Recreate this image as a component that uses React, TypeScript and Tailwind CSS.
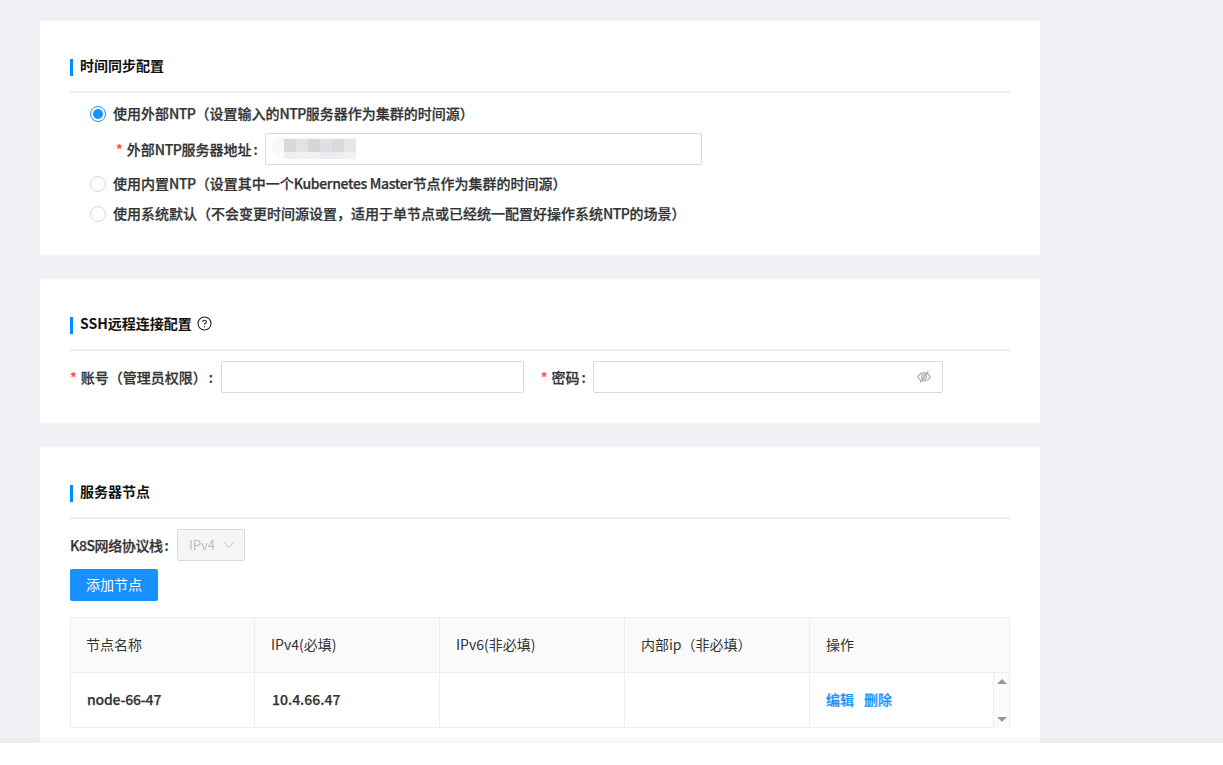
import React from 'react'

const font = "font-['Microsoft_YaHei','Noto_Sans_CJK_SC','Noto_Sans',sans-serif]"
const labelText = 'text-[14px] font-medium text-[#333] [-webkit-text-stroke:0.25px_#333]'

function SectionTitle({ title, help }: { title: string; help?: boolean }) {
  return (
    <div className="h-[72px] pt-[38px] border-b-2 border-[#eeeeee]">
      <div className="flex items-center h-[17px] border-l-[3px] border-[#0090ff] pl-[7px] text-[14px] leading-[17px] font-bold text-[#111]">
        <span className="pb-[4px]">{title}</span>
        {help && (
          <svg className="ml-[5px] mb-[4px]" width="15" height="15" viewBox="0 0 15 15" fill="none" stroke="#222" strokeWidth="1.1">
            <circle cx="7.5" cy="7.5" r="6.5" />
            <path d="M5.6 6c0-1.1.8-1.8 1.9-1.8s1.9.7 1.9 1.6c0 1.4-1.9 1.4-1.9 2.9" />
            <path d="M7.5 10.2v1.1" />
          </svg>
        )}
      </div>
    </div>
  )
}

function Radio({ checked, children }: { checked?: boolean; children: React.ReactNode }) {
  return (
    <div className="flex items-center h-[20px] pl-[20px]">
      <span className={`flex items-center justify-center w-4 h-4 rounded-full border bg-white ${checked ? 'border-[#1890ff]' : 'border-[#d9d9d9]'}`}>
        {checked && <span className="w-[10px] h-[10px] rounded-full bg-[#1890ff]" />}
      </span>
      <span className={`ml-[7px] pb-[2px] ${labelText}`}>{children}</span>
    </div>
  )
}

const mosaic = [
  ['bg-[#f7f7f7]', 'bg-[#f9f9f9]', 'bg-[#f9f9f9]', 'bg-[#f9f9f9]', 'bg-[#fafafa]', 'bg-[#fafafa]', 'bg-[#fcfcfc]'],
  ['bg-[#f7f7f7]', 'bg-[#d9d8d7]', 'bg-[#e5e2df]', 'bg-[#d5d6d9]', 'bg-[#dfe0e3]', 'bg-[#d9dadd]', 'bg-[#e6e6e6]'],
  ['bg-[#fbfbfb]', 'bg-[#f0f0f0]', 'bg-[#f2f1f0]', 'bg-[#f2f2f3]', 'bg-[#ececee]', 'bg-[#ededee]', 'bg-[#f2f2f2]'],
]
const mosaicHeights = ['h-[2px]', 'h-[13px]', 'h-[7px]']

function Required() {
  return <span className="mr-[4px] text-[#ff4d4f] text-[14px] [-webkit-text-stroke:0.25px_#ff4d4f]">*</span>
}

function Colon() {
  return <span className="ml-[2px]">:</span>
}

const rowCell = `flex items-center h-[54px] pb-[2px] border-r border-[#eeeeee] ${labelText}`

export default function App() {
  return (
    <div className={`h-[765px] w-[1223px] overflow-hidden bg-white ${font}`}>
      <div className="h-[743px] overflow-hidden bg-[#f0f1f5] pt-[21px] pl-[40px]">
        <section className="w-[1000px] h-[234px] bg-white px-[30px]">
          <SectionTitle title="时间同步配置" />
          <div className="pt-[11px]">
            <Radio checked>使用外部<span className="tracking-[-0.5px]">NTP</span>（设置输入的<span className="tracking-[-0.5px]">NTP</span>服务器作为集群的时间源）</Radio>
            <div className={`flex items-center h-[32px] mt-[9px] pl-[46px] ${labelText}`}>
              <Required />
              <span className="w-[138px] whitespace-nowrap">外部<span className="tracking-[-0.4px]">NTP</span>服务器地址<Colon /></span>
              <div className="flex items-center w-[437px] h-[32px] border border-[#d9d9d9] rounded-[2px] pl-[6px]">
                <div className="flex flex-col -mt-[2px] rounded-l-full overflow-hidden">
                  {mosaic.map((row, i) => (
                    <div key={i} className="flex">
                      {row.map((c, j) => (
                        <div key={j} className={`w-[12px] ${mosaicHeights[i]} ${c}`} />
                      ))}
                    </div>
                  ))}
                </div>
              </div>
            </div>
            <div className="mt-[9px]">
              <Radio>使用内置<span className="tracking-[-0.4px]">NTP</span>（设置其中一个<span className="tracking-[-0.35px]">Kubernetes Master</span>节点作为集群的时间源）</Radio>
            </div>
            <div className="mt-[10px]">
              <Radio>使用系统默认（不会变更时间源设置，适用于单节点或已经统一配置好操作系统<span className="tracking-[-0.5px]">NTP</span>的场景）</Radio>
            </div>
          </div>
        </section>

        <section className="w-[1000px] h-[144px] mt-[24px] bg-white px-[30px]">
          <SectionTitle title="SSH远程连接配置" help />
          <div className={`flex items-center mt-[10px] ${labelText}`}>
            <Required />
            <span className="w-[140px] whitespace-nowrap">账号（管理员权限）<Colon /></span>
            <div className="w-[303px] h-[32px] border border-[#d9d9d9] rounded-[2px]" />
            <span className="ml-[17px]"><Required /></span>
            <span className="w-[41px] whitespace-nowrap">密码<Colon /></span>
            <div className="flex items-center justify-end w-[350px] h-[32px] border border-[#d9d9d9] rounded-[2px] pr-[11px]">
              <svg width="14" height="14" viewBox="0 0 14 14" fill="none" stroke="#a8a8a8" strokeWidth="1.1">
                <path d="M.7 7C2.4 4.2 4.5 2.9 7 2.9s4.6 1.3 6.3 4.1c-1.7 2.8-3.8 4.1-6.3 4.1S2.4 9.8.7 7Z" />
                <circle cx="7" cy="7" r="2.3" />
                <path d="M2.8 12.6 11.4 1.2" />
              </svg>
            </div>
          </div>
        </section>

        <section className="w-[1000px] h-[296px] mt-[24px] bg-white px-[30px]">
          <SectionTitle title="服务器节点" />
          <div className={`flex items-center mt-[10px] h-[32px] ${labelText}`}>
            <span className="w-[107px] whitespace-nowrap tracking-[-0.4px]">K8S网络协议栈<Colon /></span>
            <div className="flex items-center w-[68px] h-[32px] pl-[11px] bg-[#f5f5f5] border border-[#d9d9d9] rounded-[2px] text-[13px] font-normal text-[#bfbfbf] [-webkit-text-stroke:0]">
              <span>IPv4</span>
              <svg className="ml-[8px]" width="12" height="8" viewBox="0 0 12 8" fill="none" stroke="#bfbfbf" strokeWidth="1">
                <path d="M1 1.2 6 6.4l5-5.2" />
              </svg>
            </div>
          </div>
          <button className="block w-[88px] h-[32px] mt-[8px] pb-[2px] bg-[#1890ff] rounded-[2px] text-[14px] text-white shadow-[0_2px_0_rgba(0,0,0,0.02)]">添加节点</button>
          <div className="mt-[16px] w-[940px] border border-[#eeeeee] border-b-0">
            <div className="grid grid-cols-[184px_185px_185px_185px_1fr] h-[55px] bg-[#fafafa] border-b border-[#eeeeee] text-[14px] text-[#333]">
              {['节点名称', 'IPv4(必填)', 'IPv6(非必填)', '内部ip（非必填）', '操作'].map((h, i) => (
                <div key={h} className={`flex items-center pb-[2px] ${i === 0 ? 'pl-[15px]' : 'pl-[16px]'} ${i < 4 ? 'border-r border-[#eeeeee]' : ''}`}>{h}</div>
              ))}
            </div>
            <div className="flex">
              <div className="grid grid-cols-[184px_185px_185px_185px_1fr] flex-1 h-[55px] border-b border-[#eeeeee]">
                <div className={`${rowCell} pl-[16px] tracking-[-0.2px]`}>node-66-47</div>
                <div className={`${rowCell} pl-[17px]`}>10.4.66.47</div>
                <div className={rowCell} />
                <div className={rowCell} />
                <div className="flex items-center h-[54px] pb-[2px] border-r border-[#eeeeee] pl-[16px] gap-[10px] text-[14px] font-medium text-[#1890ff] [-webkit-text-stroke:0.25px_#1890ff]">
                  <span>编辑</span>
                  <span>删除</span>
                </div>
              </div>
              <div className="flex flex-col justify-between items-center w-[15px] h-[55px] py-[6px] bg-[#fafafa]">
                <span className="w-0 h-0 border-x-[5px] border-x-transparent border-b-[5px] border-b-[#999]" />
                <span className="w-0 h-0 border-x-[5px] border-x-transparent border-t-[5px] border-t-[#999]" />
              </div>
            </div>
          </div>
        </section>
      </div>
      <div className="relative h-[22px] bg-white shadow-[0_-2px_8px_rgba(0,0,0,0.05)]" />
    </div>
  )
}
